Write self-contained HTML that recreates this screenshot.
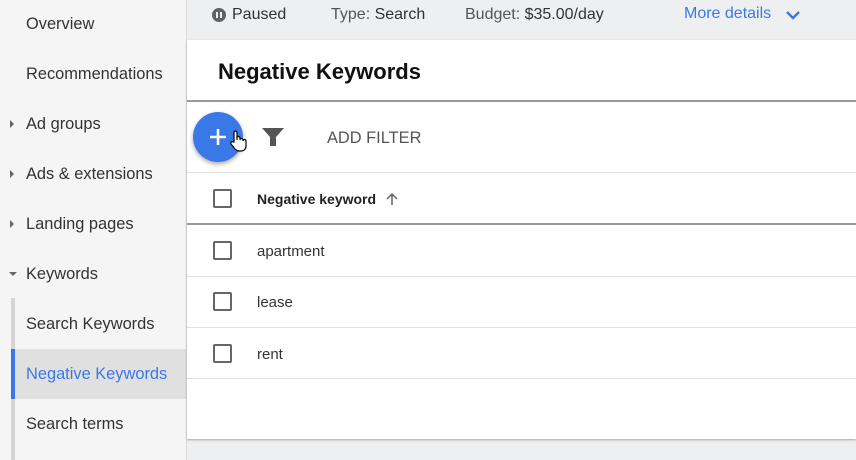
<!DOCTYPE html>
<html><head><style>
*{margin:0;padding:0;box-sizing:border-box}
body{width:856px;height:460px;overflow:hidden;font-family:"Liberation Sans",Arial,sans-serif;background:#eeeff0;position:relative;color:#202124}
.side{position:absolute;left:0;top:0;width:187px;height:460px;background:#f5f5f5;border-right:1px solid #ddd}
.si{position:absolute;left:26px;font-size:16.4px;color:#333}
.tri{position:absolute;left:10px;width:0;height:0;border-top:4px solid transparent;border-bottom:4px solid transparent;border-left:4px solid #666}
.trd{position:absolute;left:9px;width:0;height:0;border-left:4px solid transparent;border-right:4px solid transparent;border-top:4px solid #666}
.vbar{position:absolute;left:11px;top:298px;width:4px;height:162px;background:#d4d4d4}
.act{position:absolute;left:11px;top:349px;width:175px;height:50px;background:#e0e0e0;border-left:4px solid #3b78e7}
.top{position:absolute;left:187px;top:0;right:0;height:40px;background:#eeeff0;font-size:16px;color:#555}
.card{position:absolute;left:187px;top:40px;right:0;height:399px;background:#fff;box-shadow:0 1px 2px rgba(0,0,0,.3)}
.cb{position:absolute;left:26px;width:19px;height:19px;border:2px solid #666;border-radius:2px}
.hr{position:absolute;left:0;right:0;height:1px;background:#e0e0e0}
.rowt{position:absolute;left:70px;font-size:15px;color:#333}
</style></head><body>
<div class="side">
<div class="si" style="top:15px">Overview</div>
<div class="si" style="top:65px">Recommendations</div>
<div class="tri" style="top:120px"></div><div class="si" style="top:115px">Ad groups</div>
<div class="tri" style="top:170px"></div><div class="si" style="top:165px">Ads &amp; extensions</div>
<div class="tri" style="top:220px"></div><div class="si" style="top:215px">Landing pages</div>
<div class="trd" style="top:272px"></div><div class="si" style="top:265px">Keywords</div>
<div class="vbar"></div>
<div class="si" style="top:315px">Search Keywords</div>
<div class="act"></div>
<div class="si" style="top:365px;color:#3b78e7">Negative Keywords</div>
<div class="si" style="top:415px">Search terms</div>
</div>
<div class="top">
<div style="position:absolute;left:25px;top:8px;width:14px;height:14px;border-radius:50%;background:#616161"><div style="position:absolute;left:4px;top:4px;width:2px;height:6px;background:#eee"></div><div style="position:absolute;left:8px;top:4px;width:2px;height:6px;background:#eee"></div></div>
<div style="position:absolute;left:45px;top:6px;color:#333">Paused</div>
<div style="position:absolute;left:144px;top:6px">Type: <span style="color:#333">Search</span></div>
<div style="position:absolute;left:278px;top:6px">Budget: <span style="color:#333">$35.00/day</span></div>
<div style="position:absolute;left:497px;top:5px;color:#3b78e7">More details</div>
<svg style="position:absolute;left:598px;top:9px" width="16" height="12"><path d="M2 3 L8 9 L14 3" stroke="#3b78e7" stroke-width="2.4" fill="none"/></svg>
</div>
<div class="card">
<div style="position:absolute;left:31px;top:19px;font-size:22px;font-weight:bold;color:#111">Negative Keywords</div>
<div class="hr" style="top:60px;height:2px;background:#999"></div>
<div style="position:absolute;left:6px;top:72px;width:50px;height:50px;border-radius:50%;background:#3b78e7;box-shadow:0 2px 5px rgba(0,0,0,.35)"></div>
<svg style="position:absolute;left:20px;top:86px" width="22" height="22"><path d="M11 3V19M3 11H19" stroke="#fff" stroke-width="2.6"/></svg>
<svg style="position:absolute;left:40px;top:88px" width="24" height="26"><path d="M7 14V4.5a1.5 1.5 0 0 1 3 0V12l0-2a1.5 1.5 0 0 1 3 0v2a1.5 1.5 0 0 1 3 0v1a1.5 1.5 0 0 1 3 0v5c0 3-2 5-5 5h-2c-2 0-3-1-4-2l-4-5a1.5 1.5 0 0 1 2.2-2z" fill="#fff" stroke="#000" stroke-width="1.2"/></svg>
<svg style="position:absolute;left:74px;top:86px" width="24" height="22"><path d="M1 2H23L15 11V20H9V11Z" fill="#555"/></svg>
<div style="position:absolute;left:140px;top:89px;font-size:16.4px;color:#555">ADD FILTER</div>
<div class="hr" style="top:132px"></div>
<div class="cb" style="top:149px"></div>
<div style="position:absolute;left:70px;top:151px;font-size:14px;font-weight:bold;color:#222">Negative keyword</div>
<svg style="position:absolute;left:198px;top:151px" width="14" height="16"><path d="M7 14V3M2 8L7 3L12 8" stroke="#666" stroke-width="1.5" fill="none"/></svg>
<div class="hr" style="top:183px;height:2px;background:#999"></div>
<div class="cb" style="top:201px"></div><div class="rowt" style="top:203px">apartment</div>
<div class="hr" style="top:236px"></div>
<div class="cb" style="top:252px"></div><div class="rowt" style="top:254px">lease</div>
<div class="hr" style="top:287px"></div>
<div class="cb" style="top:304px"></div><div class="rowt" style="top:306px">rent</div>
<div class="hr" style="top:338px"></div>
</div>
</body></html>
